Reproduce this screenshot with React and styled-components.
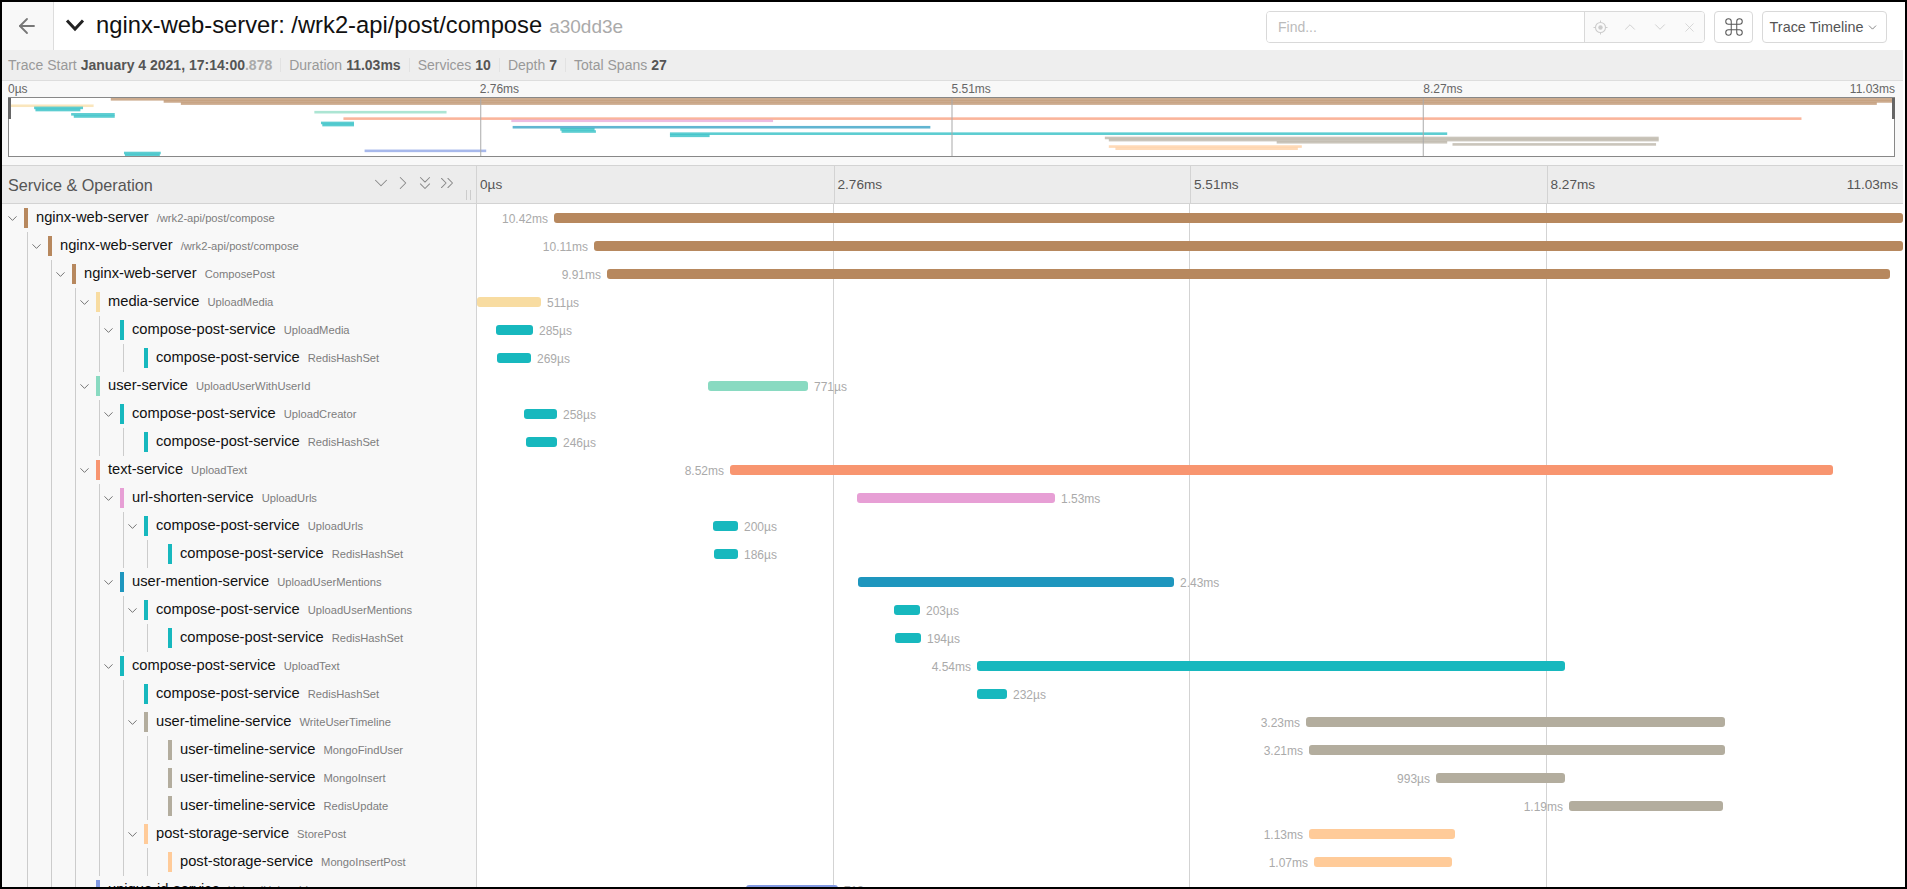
import styled, { createGlobalStyle } from 'styled-components';
import {
  ArrowLeft,
  ChevronDown,
  ChevronRight,
  ChevronUp,
  ChevronsDown,
  ChevronsRight,
  Command,
  X,
} from 'lucide-react';

const GlobalStyle = createGlobalStyle`
  html, body {
    margin: 0;
    padding: 0;
    background: #fff;
    font-family: "Liberation Sans", Arial, sans-serif;
  }
  * {
    box-sizing: border-box;
  }
`;

const NGINX = '#B7885E';
const MEDIA = '#F8DCA1';
const COMPOSE = '#17B8BE';
const USER = '#89DAC1';
const TEXT = '#F89570';
const URL_SVC = '#E79FD5';
const MENTION = '#1E96BE';
const TIMELINE = '#B3AD9E';
const STORAGE = '#FFCB99';
const UNIQUE = '#829AE3';

// x0 / x1 are page pixels read off the timeline, converted to fractions below
const SPANS = [
  { level: 0, open: true, service: 'nginx-web-server', op: '/wrk2-api/post/compose', color: NGINX, x0: 554, x1: 1903, time: '10.42ms', side: 'left' },
  { level: 1, open: true, service: 'nginx-web-server', op: '/wrk2-api/post/compose', color: NGINX, x0: 594, x1: 1903, time: '10.11ms', side: 'left' },
  { level: 2, open: true, service: 'nginx-web-server', op: 'ComposePost', color: NGINX, x0: 607, x1: 1890, time: '9.91ms', side: 'left' },
  { level: 3, open: true, service: 'media-service', op: 'UploadMedia', color: MEDIA, x0: 477, x1: 541, time: '511µs', side: 'right' },
  { level: 4, open: true, service: 'compose-post-service', op: 'UploadMedia', color: COMPOSE, x0: 496, x1: 533, time: '285µs', side: 'right' },
  { level: 5, service: 'compose-post-service', op: 'RedisHashSet', color: COMPOSE, x0: 497, x1: 531, time: '269µs', side: 'right' },
  { level: 3, open: true, service: 'user-service', op: 'UploadUserWithUserId', color: USER, x0: 708, x1: 808, time: '771µs', side: 'right' },
  { level: 4, open: true, service: 'compose-post-service', op: 'UploadCreator', color: COMPOSE, x0: 524, x1: 557, time: '258µs', side: 'right' },
  { level: 5, service: 'compose-post-service', op: 'RedisHashSet', color: COMPOSE, x0: 526, x1: 557, time: '246µs', side: 'right' },
  { level: 3, open: true, service: 'text-service', op: 'UploadText', color: TEXT, x0: 730, x1: 1833, time: '8.52ms', side: 'left' },
  { level: 4, open: true, service: 'url-shorten-service', op: 'UploadUrls', color: URL_SVC, x0: 857, x1: 1055, time: '1.53ms', side: 'right' },
  { level: 5, open: true, service: 'compose-post-service', op: 'UploadUrls', color: COMPOSE, x0: 713, x1: 738, time: '200µs', side: 'right' },
  { level: 6, service: 'compose-post-service', op: 'RedisHashSet', color: COMPOSE, x0: 714, x1: 738, time: '186µs', side: 'right' },
  { level: 4, open: true, service: 'user-mention-service', op: 'UploadUserMentions', color: MENTION, x0: 858, x1: 1174, time: '2.43ms', side: 'right' },
  { level: 5, open: true, service: 'compose-post-service', op: 'UploadUserMentions', color: COMPOSE, x0: 894, x1: 920, time: '203µs', side: 'right' },
  { level: 6, service: 'compose-post-service', op: 'RedisHashSet', color: COMPOSE, x0: 895, x1: 921, time: '194µs', side: 'right' },
  { level: 4, open: true, service: 'compose-post-service', op: 'UploadText', color: COMPOSE, x0: 977, x1: 1565, time: '4.54ms', side: 'left' },
  { level: 5, service: 'compose-post-service', op: 'RedisHashSet', color: COMPOSE, x0: 977, x1: 1007, time: '232µs', side: 'right' },
  { level: 5, open: true, service: 'user-timeline-service', op: 'WriteUserTimeline', color: TIMELINE, x0: 1306, x1: 1725, time: '3.23ms', side: 'left' },
  { level: 6, service: 'user-timeline-service', op: 'MongoFindUser', color: TIMELINE, x0: 1309, x1: 1725, time: '3.21ms', side: 'left' },
  { level: 6, service: 'user-timeline-service', op: 'MongoInsert', color: TIMELINE, x0: 1436, x1: 1565, time: '993µs', side: 'left' },
  { level: 6, service: 'user-timeline-service', op: 'RedisUpdate', color: TIMELINE, x0: 1569, x1: 1723, time: '1.19ms', side: 'left' },
  { level: 5, open: true, service: 'post-storage-service', op: 'StorePost', color: STORAGE, x0: 1309, x1: 1455, time: '1.13ms', side: 'left' },
  { level: 6, service: 'post-storage-service', op: 'MongoInsertPost', color: STORAGE, x0: 1314, x1: 1452, time: '1.07ms', side: 'left' },
  { level: 3, service: 'unique-id-service', op: 'UploadUniqueId', color: UNIQUE, x0: 746, x1: 838, time: '713µs', side: 'right' },
];

// the last two spans are below the fold, they only show in the minimap
const MINI_EXTRA = [
  { color: COMPOSE, x0: 0.061, x1: 0.0805 },
  { color: COMPOSE, x0: 0.0615, x1: 0.08 },
];

const TL_LEFT = 477;
const TL_WIDTH = 1426;
const MINI_W = 1884;
const MINI_H = 58;
const frac = (x) => (x - TL_LEFT) / TL_WIDTH;

const miniSpans = [
  ...SPANS.map((s) => ({ color: s.color, x0: frac(s.x0), x1: frac(s.x1) })),
  ...MINI_EXTRA,
];

const Frame = styled.div`
  width: 1907px;
  height: 889px;
  border: 2px solid #000;
  padding-right: 2px;
  overflow: hidden;
  background: #fff;
  display: flex;
  flex-direction: column;
`;

const TopBar = styled.header`
  height: 48px;
  flex: none;
  display: flex;
  align-items: center;
  padding-right: 16px;
`;

const BackCell = styled.div`
  width: 52px;
  height: 100%;
  background: #f8f8f8;
  border-right: 1px solid #ddd;
  color: #777;
  padding-right: 2px;
  display: flex;
  align-items: center;
  justify-content: center;
`;

const TitleToggle = styled.svg`
  width: 20px;
  height: 14px;
  margin: -2px 11px 0 11px;
  flex: none;
`;

const Title = styled.h1`
  margin: -2px 0 0;
  font-size: 23.75px;
  font-weight: 400;
  color: #111;
  white-space: nowrap;
`;

const TraceId = styled.small`
  margin-left: 7px;
  font-size: 19px;
  color: #aaa;
`;

const Tools = styled.div`
  margin-left: auto;
  display: flex;
  align-items: center;
  gap: 9px;
`;

const Search = styled.div`
  width: 439px;
  height: 32px;
  margin-top: 2px;
  border: 1px solid #d9d9d9;
  border-radius: 4px;
  display: flex;
  overflow: hidden;
`;

const SearchInput = styled.input`
  width: 318px;
  border: 0;
  border-right: 1px solid #d9d9d9;
  padding: 0 11px;
  outline: none;
  font: 14px "Liberation Sans", Arial, sans-serif;
  color: #333;

  &::placeholder {
    color: #bbb;
  }
`;

const SearchIcons = styled.div`
  flex: 1;
  background: #fafafa;
  color: #ccc;
  display: flex;
  align-items: center;
  justify-content: space-between;
  padding: 0 7px 0 8px;
`;

const ToolButton = styled.button`
  height: 32px;
  margin-top: 2px;
  border: 1px solid #d9d9d9;
  border-radius: 4px;
  background: #fff;
  color: #555;
  padding: 0;
  font: 14.4px "Liberation Sans", Arial, sans-serif;
  display: flex;
  align-items: center;
  justify-content: center;
`;

const IconButton = styled(ToolButton)`
  width: 39px;
`;

const ViewButton = styled(ToolButton)`
  width: 125px;
  gap: 3px;
`;

const MetaRow = styled.div`
  height: 30px;
  flex: none;
  background: #eee;
  display: flex;
  align-items: center;
  padding-left: 6px;
  font-size: 14px;
`;

const MetaItem = styled.div`
  padding: 0 8px 0 ${(p) => (p.$first ? '0' : '8px')};
  border-right: ${(p) => (p.$last ? '0' : '1px solid #e2e2e2')};
  color: #999;
  line-height: 14px;
  white-space: nowrap;
`;

const MetaValue = styled.strong`
  margin-left: 4px;
  color: #555;
`;

const MetaMillis = styled.span`
  color: #aaa;
`;

const Minimap = styled.section`
  height: 85px;
  flex: none;
  background: #f8f8f8;
  border-top: 1px solid #ddd;
  padding: 0 8px 0 6px;
`;

const MiniLabels = styled.div`
  height: 16px;
  display: grid;
  grid-template-columns: repeat(4, 1fr);
  font-size: 12px;
  color: #666;
  line-height: 17px;
`;

const MiniLabel = styled.div`
  display: flex;
  justify-content: space-between;
`;

const MiniCanvas = styled.div`
  position: relative;
  height: 60px;
  background: #fff;
  border: 1px solid #888;
`;

const MiniGraph = styled.svg`
  display: block;
  width: 100%;
  height: 100%;
`;

const MiniHandle = styled.div`
  position: absolute;
  top: 0;
  ${(p) => (p.$end ? 'right: -1px;' : 'left: -1px;')}
  width: 3px;
  height: 21px;
  background: #666;
`;

const TableHead = styled.div`
  height: 39px;
  flex: none;
  display: flex;
  background: #ececec;
  border-top: 1px solid #d3d3d3;
  border-bottom: 1px solid #d3d3d3;
`;

const NameHead = styled.div`
  position: relative;
  width: 475px;
  flex: none;
  border-right: 1px solid #d3d3d3;
  display: flex;
  align-items: center;
  padding: 1px 18px 0 6px;
  font-size: 16.2px;
  color: #555;
`;

const HeadActions = styled.div`
  margin-left: auto;
  display: flex;
  color: #888;
  margin-top: -4px;
`;

const Grip = styled.span`
  position: absolute;
  right: 5px;
  bottom: 3px;
  width: 5px;
  height: 10px;
  border-left: 1px solid #ccc;
  border-right: 1px solid #ccc;
`;

const TickRow = styled.div`
  flex: 1;
  display: grid;
  grid-template-columns: repeat(4, 1fr);
  font-size: 13.6px;
  color: #555;
`;

const Tick = styled.div`
  display: flex;
  align-items: center;
  justify-content: space-between;
  padding: 0 5px 0 3px;
  border-left: ${(p) => (p.$first ? '0' : '1px solid #d3d3d3')};
`;

const Rows = styled.div`
  flex: 1;
  min-height: 0;
`;

const Row = styled.div`
  height: 28px;
  display: flex;
`;

const NameCell = styled.div`
  width: 475px;
  flex: none;
  background: #f8f8f8;
  border-right: 1px solid #d3d3d3;
  padding-left: 2px;
  display: flex;
  align-items: stretch;
`;

const Guide = styled.span`
  width: 24px;
  flex: none;
  border-right: 1px solid #ccc;
`;

const Toggle = styled.span`
  width: 20px;
  flex: none;
  padding-left: 1px;
  color: #555;
  display: flex;
  align-items: center;
`;

const ServiceMark = styled.span`
  width: 4px;
  height: 20px;
  flex: none;
  align-self: center;
  background: ${(p) => p.$color};
`;

const ServiceName = styled.span`
  margin-left: 8px;
  align-self: center;
  font-size: 14.7px;
  color: #111;
  white-space: nowrap;
  margin-top: -3px;
`;

const OperationName = styled.span`
  margin-left: 8px;
  align-self: center;
  font-size: 11.2px;
  color: #7d7d7d;
  white-space: nowrap;
`;

const BarCell = styled.div`
  flex: 1;
  display: flex;
  align-items: center;
  background-image: linear-gradient(#d3d3d3, #d3d3d3), linear-gradient(#d3d3d3, #d3d3d3),
    linear-gradient(#d3d3d3, #d3d3d3);
  background-size: 1px 100%;
  background-repeat: no-repeat;
  background-position: 356px 0, 712px 0, 1069px 0;
`;

const Bar = styled.div`
  position: relative;
  height: 10px;
  flex: none;
  border-radius: 3px;
  background: ${(p) => p.$color};
`;

const BarLabel = styled.span`
  position: absolute;
  top: -1px;
  ${(p) => (p.$side === 'left' ? 'right: calc(100% + 6px);' : 'left: calc(100% + 6px);')}
  font-size: 12px;
  line-height: 15px;
  color: #aaa;
  white-space: nowrap;
`;

const LocateIcon = () => (
  <svg width="15" height="15" viewBox="0 0 15 15" fill="none" stroke="currentColor">
    <circle cx="7.5" cy="7.5" r="5" strokeWidth="1.1" />
    <circle cx="7.5" cy="7.5" r="2.2" fill="currentColor" stroke="none" />
    <path d="M7.5 0.5v2M7.5 12.5v2M0.5 7.5h2M12.5 7.5h2" strokeWidth="1" />
  </svg>
);

const Trace = () => (
  <Frame>
    <TopBar>
      <BackCell>
        <ArrowLeft size={24} strokeWidth={1.8} />
      </BackCell>
      <TitleToggle viewBox="0 0 20 14">
        <polyline points="2,2.5 10,11 18,2.5" fill="none" stroke="#222" strokeWidth="3" />
      </TitleToggle>
      <Title>
        nginx-web-server: /wrk2-api/post/compose
        <TraceId>a30dd3e</TraceId>
      </Title>
      <Tools>
        <Search>
          <SearchInput placeholder="Find..." readOnly />
          <SearchIcons>
            <LocateIcon />
            <ChevronUp size={18} strokeWidth={1.2} />
            <ChevronDown size={18} strokeWidth={1.2} />
            <X size={15} strokeWidth={1.2} />
          </SearchIcons>
        </Search>
        <IconButton>
          <Command size={22} strokeWidth={1.1} />
        </IconButton>
        <ViewButton>
          Trace Timeline
          <ChevronDown size={13} strokeWidth={1.3} />
        </ViewButton>
      </Tools>
    </TopBar>

    <MetaRow>
      <MetaItem $first>
        Trace Start
        <MetaValue>
          January 4 2021, 17:14:00<MetaMillis>.878</MetaMillis>
        </MetaValue>
      </MetaItem>
      <MetaItem>
        Duration<MetaValue>11.03ms</MetaValue>
      </MetaItem>
      <MetaItem>
        Services<MetaValue>10</MetaValue>
      </MetaItem>
      <MetaItem>
        Depth<MetaValue>7</MetaValue>
      </MetaItem>
      <MetaItem $last>
        Total Spans<MetaValue>27</MetaValue>
      </MetaItem>
    </MetaRow>

    <Minimap>
      <MiniLabels>
        <MiniLabel>0µs</MiniLabel>
        <MiniLabel>2.76ms</MiniLabel>
        <MiniLabel>5.51ms</MiniLabel>
        <MiniLabel>
          8.27ms
          <span>11.03ms</span>
        </MiniLabel>
      </MiniLabels>
      <MiniCanvas>
        <MiniGraph viewBox={`0 0 ${MINI_W} ${MINI_H}`} preserveAspectRatio="none">
          {miniSpans.map((s, i) => (
            <rect
              key={i}
              x={s.x0 * MINI_W}
              y={(i * MINI_H) / 27}
              width={(s.x1 - s.x0) * MINI_W}
              height={2.6}
              fill={s.color}
              opacity={0.7}
            />
          ))}
          {[1, 2, 3].map((n) => (
            <rect key={n} x={(n * MINI_W) / 4} y="0" width="1" height={MINI_H} fill="#aaa" />
          ))}
        </MiniGraph>
        <MiniHandle />
        <MiniHandle $end />
      </MiniCanvas>
    </Minimap>

    <TableHead>
      <NameHead>
        Service &amp; Operation
        <HeadActions>
          <ChevronDown size={22} strokeWidth={1.1} />
          <ChevronRight size={22} strokeWidth={1.1} />
          <ChevronsDown size={22} strokeWidth={1.1} />
          <ChevronsRight size={22} strokeWidth={1.1} />
        </HeadActions>
        <Grip />
      </NameHead>
      <TickRow>
        <Tick $first>0µs</Tick>
        <Tick>2.76ms</Tick>
        <Tick>5.51ms</Tick>
        <Tick>
          8.27ms
          <span>11.03ms</span>
        </Tick>
      </TickRow>
    </TableHead>

    <Rows>
      {SPANS.map((s, i) => (
        <Row key={i}>
          <NameCell>
            {Array.from({ length: s.level }, (_, g) => (
              <Guide key={g} />
            ))}
            <Toggle>{s.open && <ChevronDown size={15} strokeWidth={1.3} />}</Toggle>
            <ServiceMark $color={s.color} />
            <ServiceName>{s.service}</ServiceName>
            <OperationName>{s.op}</OperationName>
          </NameCell>
          <BarCell>
            <Bar
              $color={s.color}
              style={{
                marginLeft: `${frac(s.x0) * 100}%`,
                width: `${(frac(s.x1) - frac(s.x0)) * 100}%`,
              }}
            >
              <BarLabel $side={s.side}>{s.time}</BarLabel>
            </Bar>
          </BarCell>
        </Row>
      ))}
    </Rows>
  </Frame>
);

export default function App() {
  return (
    <>
      <GlobalStyle />
      <Trace />
    </>
  );
}
